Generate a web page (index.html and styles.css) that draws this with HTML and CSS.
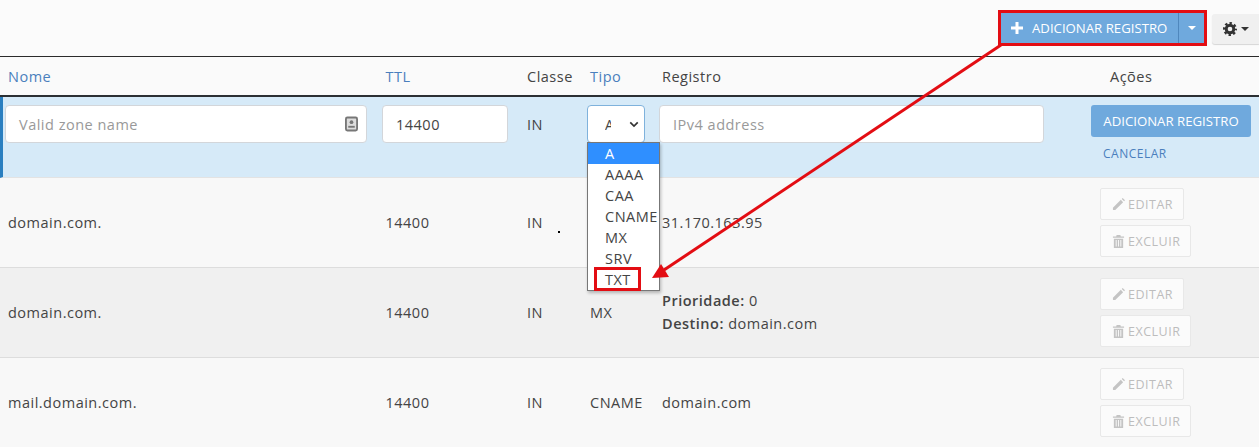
FILE: index.html
```html
<!DOCTYPE html>
<html lang="pt">
<head>
<meta charset="utf-8">
<title>Registros DNS</title>
<link rel="stylesheet" href="styles.css">
</head>
<body>
<div class="page">
  <div class="toolbar">
    <div class="split">
      <button class="btn-main"><svg class="ic-plus" viewBox="0 0 12 12"><path d="M4.500 0h3v4.500H12v3H7.500V12h-3V7.500H0v-3h4.500z"/></svg>ADICIONAR REGISTRO</button>
      <button class="btn-caret"><span class="caret"></span></button>
    </div>
    <button class="btn-gear"><svg class="ic-gear" viewBox="0 0 24 24"><circle cx="12" cy="12" r="6.500" fill="none" stroke="#333" stroke-width="5"/><circle cx="12" cy="12" r="10" fill="none" stroke="#333" stroke-width="4" stroke-dasharray="4.100 3.754" stroke-dashoffset="2"/></svg><span class="caret dark"></span></button>
  </div>

  <div class="row head">
    <a class="link">Nome</a>
    <a class="link">TTL</a>
    <span>Classe</span>
    <a class="link">Tipo</a>
    <span>Registro</span>
    <span class="head-actions">Ações</span>
  </div>

  <div class="row add">
    <div class="field name"><span class="ph">Valid zone name</span>
      <svg class="ic-contact" viewBox="0 0 14 16"><rect x="1" y="1" width="12" height="14" rx="1.500" fill="#ddd" stroke="#777" stroke-width="2"/><circle cx="7" cy="6" r="2" fill="#777"/><path d="M3.500 10h7v2h-7z" fill="#777"/></svg>
    </div>
    <div class="field ttl">14400</div>
    <span class="add-in">IN</span>
    <div class="field select"><span class="sel-val">A</span><svg class="ic-chev" viewBox="0 0 12 8"><path d="M1.500 1.500L6 6l4.500-4.500" fill="none" stroke="#333" stroke-width="2"/></svg></div>
    <div class="field ipv"><span class="ph">IPv4 address</span></div>
    <div class="add-actions">
      <button class="btn-add">ADICIONAR REGISTRO</button>
      <a class="cancel">CANCELAR</a>
    </div>
  </div>

  <div class="row rec">
    <span>domain.com.</span><span>14400</span><span>IN</span><span></span>
    <span>31.170.163.95</span>
    <div class="acts">
      <span class="ghost"><svg class="ic-s" viewBox="0 0 14 14"><path d="M1 10.500L9.500 2l2.500 2.500L3.500 13H1zM10.500 1l1-1L14 2.500l-1 1z"/></svg>EDITAR</span>
      <span class="ghost"><svg class="ic-s" viewBox="0 0 14 14"><path d="M5 0h4l.5 1.500H13V3H1V1.500h3.500zM2 4h10v10H2zM4 5.500v7h1v-7zm2.500 0v7h1v-7zm2.500 0v7h1v-7z" fill-rule="evenodd"/></svg>EXCLUIR</span>
    </div>
  </div>

  <div class="row rec alt">
    <span>domain.com.</span><span>14400</span><span>IN</span><span>MX</span>
    <div class="multi"><div><b>Prioridade:</b> 0</div><div><b>Destino:</b> domain.com</div></div>
    <div class="acts">
      <span class="ghost"><svg class="ic-s" viewBox="0 0 14 14"><path d="M1 10.500L9.500 2l2.500 2.500L3.500 13H1zM10.500 1l1-1L14 2.500l-1 1z"/></svg>EDITAR</span>
      <span class="ghost"><svg class="ic-s" viewBox="0 0 14 14"><path d="M5 0h4l.5 1.500H13V3H1V1.500h3.500zM2 4h10v10H2zM4 5.500v7h1v-7zm2.500 0v7h1v-7zm2.500 0v7h1v-7z" fill-rule="evenodd"/></svg>EXCLUIR</span>
    </div>
  </div>

  <div class="row rec last">
    <span>mail.domain.com.</span><span>14400</span><span>IN</span><span>CNAME</span>
    <span>domain.com</span>
    <div class="acts">
      <span class="ghost"><svg class="ic-s" viewBox="0 0 14 14"><path d="M1 10.500L9.500 2l2.500 2.500L3.500 13H1zM10.500 1l1-1L14 2.500l-1 1z"/></svg>EDITAR</span>
      <span class="ghost"><svg class="ic-s" viewBox="0 0 14 14"><path d="M5 0h4l.5 1.500H13V3H1V1.500h3.500zM2 4h10v10H2zM4 5.500v7h1v-7zm2.500 0v7h1v-7zm2.500 0v7h1v-7z" fill-rule="evenodd"/></svg>EXCLUIR</span>
    </div>
  </div>

  <ul class="dropdown">
    <li class="sel">A</li><li>AAAA</li><li>CAA</li><li>CNAME</li><li>MX</li><li>SRV</li><li>TXT</li>
  </ul>
  <div class="mark mark-top"></div>
  <div class="mark mark-txt"></div>
  <div class="dot"></div>
  <svg class="arrow" viewBox="0 0 1259 447" width="1259" height="447">
    <path d="M1001 45L664 270" stroke="#e30d13" stroke-width="3" fill="none"/>
    <path d="M652 278L669 277L661 264z" fill="#e30d13"/>
  </svg>
</div>
</body>
</html>
```
FILE: styles.css
```css
* { box-sizing: border-box; }
html, body { margin: 0; padding: 0; }
body { font-family: "Open Sans", sans-serif; font-size: 14.5px; letter-spacing: .5px; color: #444; background: #f8f8f8; }
.page { position: relative; width: 1259px; height: 447px; overflow: hidden; }
button { font-family: inherit; border: 0; padding: 0; }

.toolbar { height: 57px; border-bottom: 1px solid #2b2b2b; display: flex; justify-content: flex-end; align-items: flex-start; padding-top: 13px; background: #fbfbfb; }
.split { display: flex; height: 30px; margin-right: 8px; }
.btn-main { width: 178px; background: #6fa9dd; color: #fff; font-size: 13.200px; display: flex; align-items: center; gap: 9px; padding-left: 10px; border-right: 1px solid #4f87bd; }
.ic-plus { width: 12px; height: 12px; fill: #fff; }
.btn-caret { width: 25px; background: #6fa9dd; display: flex; align-items: center; justify-content: center; }
.caret { display: block; width: 0; height: 0; border: 4px solid transparent; border-top-color: #fff; border-bottom: 0; }
.caret.dark { border-top-color: #333; }
.btn-gear { width: 47px; height: 30px; margin-top: 1px; background: #f0f0f0; border-radius: 3px 0 0 3px; display: flex; align-items: center; gap: 4px; padding-left: 11px; box-shadow: 0 1px 1px rgba(0,0,0,.15); }
.ic-gear { width: 14px; height: 14px; }

.row { display: grid; grid-template-columns: 377.500px 141.500px 63px 72px 1fr 159px; padding-left: 8px; align-items: center; }
.head { height: 40px; border-bottom: 2px solid #2b2f33; background: #fafafa; }
.link { color: #4a7fbd; }
.head-actions { padding-left: 10px; }

.add { height: 81px; background: #d6eaf8; border-left: 3px solid #2a7fc0; padding-left: 0; grid-template-columns: 379px 145px 60px 72px 447px 1fr; align-items: start; padding-top: 8px; border-bottom: 1px solid #e3e3e3; position: relative; }
.field { height: 38px; background: #fff; border: 1px solid #d3d6da; border-radius: 4px; display: flex; align-items: center; padding-left: 13px; }
.name { width: 362px; margin-left: 2px; justify-content: space-between; padding-right: 8px; }
.ttl { width: 126px; }
.add-in { line-height: 40px; }
.select { width: 58px; border-color: #7fb2dc; justify-content: space-between; padding: 0 5px 0 17px; }
.sel-val { width: 6px; overflow: hidden; font-size: 14px; }
.ipv { width: 385px; padding-left: 13px; }
.ph { color: #999; }
.ic-contact { width: 13px; height: 16px; }
.ic-chev { width: 10px; height: 7px; }
.add-actions { margin-left: -15px; display: flex; flex-direction: column; align-items: flex-start; }
.btn-add { width: 160px; height: 32px; background: #6fa9dd; color: #fff; border-radius: 3px; font-size: 13.200px; }
.cancel { color: #4a7fbd; font-size: 12px; margin: 8px 0 0 12px; }

.rec { height: 90px; border-bottom: 1px solid #ddd; background: #f8f8f8; }
.alt { background: #f0f0f0; }
.last { border-bottom: 0; height: 89px; }
.multi { line-height: 23px; margin-top: -2px; }
b { font-weight: 600; color: #444; }
.acts { display: flex; flex-direction: column; align-items: flex-start; gap: 5px; }
.ghost { height: 32px; padding: 0 10px 0 11px; border: 1px solid #e8e8e8; border-radius: 2px; background: #fbfbfb; color: #bdbdbd; font-size: 12.500px; display: flex; align-items: center; gap: 3px; }
.ic-s { width: 13px; height: 13px; fill: #c4c4c4; }

.dropdown { position: absolute; left: 587px; top: 142px; width: 73px; margin: 0; padding: 0; list-style: none; background: #fff; border: 1px solid #777; box-shadow: 1px 2px 3px rgba(0,0,0,.25); font-size: 14.500px; height: 149px; z-index: 2; }
.dropdown li { height: 21px; line-height: 21px; padding-left: 17px; white-space: nowrap; color: #444; }
.dropdown .sel { background: #2f8fff; color: #fff; }
.mark { position: absolute; border: 3px solid #e30d13; z-index: 3; }
.mark-top { left: 998px; top: 10px; width: 209px; height: 36px; }
.mark-txt { left: 594px; top: 267px; width: 47px; height: 24px; }
.dot { position: absolute; left: 558px; top: 231px; width: 2px; height: 2px; background: #000; }
.arrow { position: absolute; left: 0; top: 0; z-index: 4; pointer-events: none; }
```
